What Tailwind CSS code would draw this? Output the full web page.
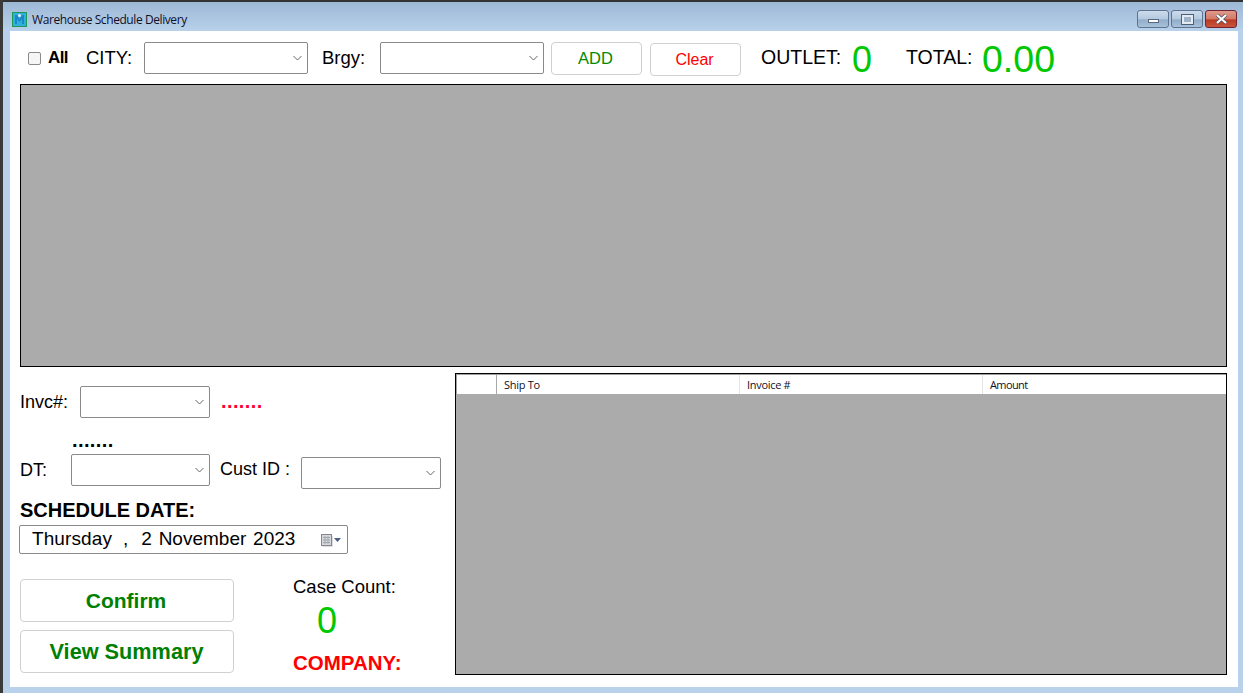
<!DOCTYPE html>
<html lang="en">
<head>
  <meta charset="UTF-8">
  <title>Warehouse Schedule Delivery</title>
  <script src="https://cdn.jsdelivr.net/npm/@tailwindcss/browser@4"></script>
</head>
<body class="m-0 overflow-hidden font-['Liberation_Sans',Arial,sans-serif] text-black">
  <div class="w-[1243px] h-[693px] bg-[#b9d1ea] overflow-hidden flex">
    <!-- left edge of the window behind -->
    <div class="w-[3px] h-full bg-[#3a3a3a] shrink-0"></div>
    <div class="flex-1 flex flex-col">
      <!-- Title bar -->
      <div class="h-[31px] shrink-0 border-t-2 border-[#333] bg-gradient-to-b from-[#9db8d6] to-[#b9d1ea] flex items-start">
        <svg class="w-[15px] h-[15px] ml-[9px] mt-[10px] shrink-0" viewBox="0 0 15 15">
          <rect x="0.5" y="0.5" width="14" height="14" fill="#2fb0e0" stroke="#1f9a55"/>
          <path d="M3 12V3h2l2.5 4L10 3h2v9h-2V7L7.5 10 5 7v5z" fill="#1c86c8"/>
          <circle cx="7.5" cy="3.5" r="1.5" fill="#e8f4ee"/>
        </svg>
        <span class="ml-[5px] mt-[10px] text-[12px] leading-[15px] text-[#101028] font-['Open_Sans',sans-serif] tracking-[-0.42px]">Warehouse Schedule Delivery</span>
        <div class="ml-auto mr-[6px] mt-[8px] flex gap-[2px]">
          <div class="w-[32px] h-[18px] rounded-[3px] border border-[#5d7390] bg-[linear-gradient(#cddcec_0%,#b4c9df_50%,#92adc9_55%,#a9c1da_100%)] flex items-center justify-center">
            <div class="w-[11px] h-[4px] mt-[3px] bg-white border border-[#56667c]"></div>
          </div>
          <div class="w-[32px] h-[18px] rounded-[3px] border border-[#5d7390] bg-[linear-gradient(#cddcec_0%,#b4c9df_50%,#92adc9_55%,#a9c1da_100%)] flex items-center justify-center">
            <div class="w-[11px] h-[9px] bg-[#9fb2c8] border-2 border-[#e4eaf2] outline outline-[#4f5f75]"></div>
          </div>
          <div class="w-[32px] h-[18px] rounded-[3px] border border-[#6e2232] bg-[linear-gradient(#e09a8a_0%,#d27a66_50%,#bb3a22_55%,#c9553c_100%)] flex items-center justify-center">
            <svg class="w-[13px] h-[10px]" viewBox="0 0 13 10"><path d="M2 1l9 8M11 1L2 9" stroke="#46505f" stroke-width="3.6"/><path d="M2 1l9 8M11 1L2 9" stroke="#fff" stroke-width="2.2"/></svg>
          </div>
        </div>
      </div>

      <!-- Client area -->
      <div class="ml-[7px] w-[1228px] h-[656px] bg-white">
        <!-- Toolbar -->
        <div class="h-[53px] flex items-start">
          <input type="checkbox" class="ml-[18px] mt-[21px] w-[13px] h-[13px] appearance-none border border-[#8a8a8a] rounded-[2px] bg-[#f6f6f6] shrink-0">
          <span class="ml-[7px] mt-[18px] w-[20px] text-[17px] leading-[18px] font-bold tracking-[-0.6px] whitespace-nowrap">All</span>
          <span class="ml-[18px] mt-[16px] w-[46px] text-[18.5px] leading-[21px]">CITY:</span>
          <div class="ml-[12px] mt-[11px] w-[164px] h-[32px] border border-[#8a8a8a] rounded-[2px] flex items-center justify-end pr-[5px] shrink-0">
            <svg class="w-[9px] h-[6px]" viewBox="0 0 9 6"><path d="M0.5 1l4 4 4-4" fill="none" stroke="#666"/></svg>
          </div>
          <span class="ml-[14px] mt-[16px] w-[43px] text-[18.5px] leading-[21px]">Brgy:</span>
          <div class="ml-[15px] mt-[11px] w-[164px] h-[32px] border border-[#8a8a8a] rounded-[2px] flex items-center justify-end pr-[5px] shrink-0">
            <svg class="w-[9px] h-[6px]" viewBox="0 0 9 6"><path d="M0.5 1l4 4 4-4" fill="none" stroke="#666"/></svg>
          </div>
          <button class="ml-[7px] mt-[11px] w-[91px] h-[33px] pr-[2px] border border-[#d0d0d0] rounded-[4px] bg-white text-[#008a00] text-[16.5px] shrink-0">ADD</button>
          <button class="ml-[8px] mt-[12px] w-[91px] h-[33px] pr-[2px] border border-[#d0d0d0] rounded-[4px] bg-white text-[#ff0000] text-[16px] shrink-0">Clear</button>
          <span class="ml-[20px] mt-[16px] w-[80px] text-[19.5px] leading-[21px]">OUTLET:</span>
          <span class="ml-[11px] mt-[8px] w-[20px] text-[36px] leading-[41px] text-[#00c800]">0</span>
          <span class="ml-[34px] mt-[16px] w-[66px] text-[19.5px] leading-[21px]">TOTAL:</span>
          <span class="ml-[10px] mt-[6px] text-[37.5px] leading-[45px] text-[#00c800]">0.00</span>
        </div>

        <!-- Main grid -->
        <div class="ml-[10px] w-[1207px] h-[283px] bg-[#ababab] border border-black"></div>

        <!-- Lower section -->
        <div class="flex mt-[6px]">
          <div class="w-[445px] shrink-0 pl-[10px]">
            <div class="flex items-start h-[55px] pt-[13px]">
              <span class="mt-[6px] w-[60px] text-[18px] leading-[21px]">Invc#:</span>
              <div class="w-[130px] h-[32px] border border-[#8a8a8a] rounded-[2px] flex items-center justify-end pr-[5px] shrink-0">
                <svg class="w-[9px] h-[6px]" viewBox="0 0 9 6"><path d="M0.5 1l4 4 4-4" fill="none" stroke="#666"/></svg>
              </div>
              <span class="ml-[11px] mt-[4px] text-[20px] leading-[22px] font-bold tracking-[0.4px] text-[#ff0033]">.......</span>
            </div>
            <div class="ml-[52px] mt-[1px] h-[21px] text-[20px] leading-[22px] font-bold tracking-[0.4px]">.......</div>
            <div class="flex items-start mt-[4px] h-[46px]">
              <span class="mt-[6px] w-[51px] text-[18px] leading-[21px]">DT:</span>
              <div class="w-[139px] h-[32px] border border-[#8a8a8a] rounded-[2px] flex items-center justify-end pr-[5px] shrink-0">
                <svg class="w-[9px] h-[6px]" viewBox="0 0 9 6"><path d="M0.5 1l4 4 4-4" fill="none" stroke="#666"/></svg>
              </div>
              <span class="ml-[10px] mt-[5px] w-[81px] text-[18px] leading-[21px] whitespace-nowrap">Cust ID :</span>
              <div class="mt-[3px] w-[140px] h-[32px] border border-[#8a8a8a] rounded-[2px] flex items-center justify-end pr-[5px] shrink-0">
                <svg class="w-[9px] h-[6px]" viewBox="0 0 9 6"><path d="M0.5 1l4 4 4-4" fill="none" stroke="#666"/></svg>
              </div>
            </div>
            <div class="text-[20px] leading-[21px] font-bold">SCHEDULE DATE:</div>
            <div class="mt-[4px] -ml-px w-[329px] h-[29px] border border-[#8a8a8a] rounded-[2px] flex items-center pl-[12px] text-[19px] whitespace-pre">
              <span class="tracking-[0.1px]">Thursday</span>
              <span class="ml-[11px]">,</span>
              <span class="ml-[13px] [word-spacing:1.5px]">2 November 2023</span>
              <svg class="ml-auto mr-[4px] w-[23px] h-[14px]" viewBox="0 0 23 14">
                <rect x="1.5" y="1.5" width="10" height="11" fill="#d5d7dc" stroke="#85898f"/>
                <path d="M3 4.5h7M3 7h7M3 9.5h7M5 3v8M8 3v8" stroke="#a5a9b1"/>
                <path d="M12.5 13.5h-10M12.5 3v10" stroke="#dcdcdc"/>
                <path d="M14 5h7l-3.5 4z" fill="#4a5f80"/>
              </svg>
            </div>
            <div class="flex mt-[25px]">
              <div class="flex flex-col gap-[8px] w-[214px] shrink-0">
                <button class="h-[43px] pr-[2px] border border-[#d0d0d0] rounded-[4px] bg-white text-[#008000] text-[21px] font-bold">Confirm</button>
                <button class="h-[43px] pt-[2px] pr-[1px] border border-[#d0d0d0] rounded-[4px] bg-white text-[#008000] text-[21.7px] font-bold">View Summary</button>
              </div>
              <div class="ml-[59px] -mt-[3px]">
                <div class="text-[18.5px] leading-[21px] whitespace-nowrap">Case Count:</div>
                <div class="ml-[24px] mt-[3px] text-[36px] leading-[41px] text-[#00c800]">0</div>
                <div class="mt-[10px] text-[20.5px] leading-[23px] font-bold text-[#ff0000] whitespace-nowrap">COMPANY:</div>
              </div>
            </div>
          </div>

          <!-- Invoice list -->
          <div class="w-[772px] h-[302px] border border-black bg-[#ababab] flex flex-col shrink-0">
            <div class="h-[20px] bg-white flex text-[11px] leading-[20px] text-[#101028] font-['Open_Sans',sans-serif] tracking-[-0.3px] border-l border-t border-[#a0a0a0]">
              <div class="w-[40px] border-r border-[#a8a8a8]"></div>
              <div class="w-[243px] pl-[7px] border-r border-[#e4e4e4]">Ship To</div>
              <div class="w-[243px] pl-[7px] border-r border-[#e4e4e4]">Invoice #</div>
              <div class="flex-1 pl-[7px] tracking-[-0.6px]">Amount</div>
            </div>
          </div>
        </div>
      </div>
    </div>
  </div>
</body>
</html>
